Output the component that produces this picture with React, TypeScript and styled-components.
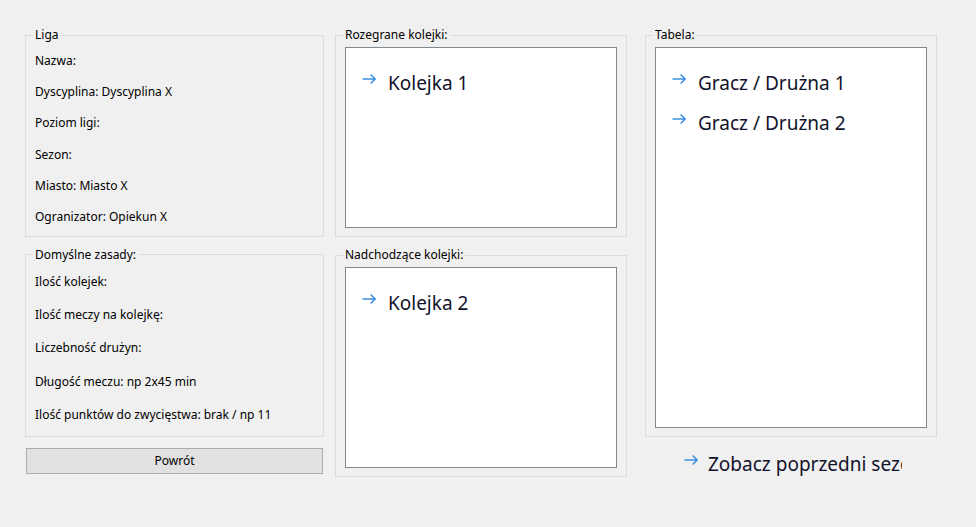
import React from "react";
import styled, { createGlobalStyle } from "styled-components";

const GlobalStyle = createGlobalStyle`
  html, body {
    margin: 0;
    padding: 0;
    background: #f0f0f0;
  }
  body {
    font-family: "Noto Sans", "Open Sans", sans-serif;
    font-size: 12px;
    color: #000;
  }
`;

const Page = styled.div`
  width: 976px;
  height: 527px;
  box-sizing: border-box;
  padding: 27px 0 0 25px;
  display: flex;
  align-items: flex-start;
`;

const Column = styled.div<{ $width: number; $ml?: number }>`
  width: ${(p) => p.$width}px;
  margin-left: ${(p) => p.$ml ?? 0}px;
  display: flex;
  flex-direction: column;
  gap: 10px;
`;

const GroupBox = styled.fieldset<{ $pt: number; $pb: number }>`
  margin: 0;
  min-width: 0;
  border: 1px solid #dcdcdc;
  padding: ${(p) => p.$pt}px 9px ${(p) => p.$pb}px;
  display: flex;
  flex-direction: column;
`;

const Legend = styled.legend`
  padding: 0 2px;
  margin-left: -2px;
  font-size: 12px;
  line-height: 16px;
  color: #000;
`;

const Fields = styled.div<{ $gap: number }>`
  display: flex;
  flex-direction: column;
  gap: ${(p) => p.$gap}px;
`;

const Field = styled.div`
  font-size: 12px;
  line-height: 16px;
  white-space: nowrap;
`;

const ListBox = styled.div<{ $height: number }>`
  height: ${(p) => p.$height}px;
  box-sizing: border-box;
  background: #fff;
  border: 1px solid #828790;
  padding: 21px 0 0 16px;
  display: flex;
  flex-direction: column;
  gap: 12px;
  overflow: hidden;
`;

const LinkItem = styled.div<{ $gap: number }>`
  display: flex;
  align-items: flex-start;
  gap: ${(p) => p.$gap}px;
  font-size: 19px;
  line-height: 28px;
  color: #12122c;
  white-space: nowrap;
`;

const ArrowIcon = styled.svg`
  flex: none;
  margin-top: 5px;
`;

const Button = styled.button`
  margin: 1px 1px 0;
  height: 26px;
  box-sizing: border-box;
  background: #e1e1e1;
  border: 1px solid #adadad;
  font-family: inherit;
  font-size: 12px;
  color: #000;
  padding: 0;
`;

const FooterLink = styled.div`
  margin: 3px 0 0 39px;
  width: 218px;
  overflow: hidden;
`;

const Arrow = () => (
  <ArrowIcon width="14" height="10" viewBox="0 0 14 10">
    <path
      d="M0.5 5H13.2M8.6 0.6L13.1 5L8.6 9.4"
      fill="none"
      stroke="#3a8ee0"
      strokeWidth="1.45"
    />
  </ArrowIcon>
);

const Item = ({ text, gap = 12 }: { text: string; gap?: number }) => (
  <LinkItem $gap={gap}>
    <Arrow />
    <span>{text}</span>
  </LinkItem>
);

export default function App() {
  return (
    <>
      <GlobalStyle />
      <Page>
        <Column $width={299}>
          <GroupBox $pt={10} $pb={11}>
            <Legend>Liga</Legend>
            <Fields $gap={15.2}>
              <Field>Nazwa:</Field>
              <Field>Dyscyplina: Dyscyplina X</Field>
              <Field>Poziom ligi:</Field>
              <Field>Sezon:</Field>
              <Field>Miasto: Miasto X</Field>
              <Field>Ogranizator: Opiekun X</Field>
            </Fields>
          </GroupBox>
          <GroupBox $pt={11} $pb={13}>
            <Legend>Domyślne zasady:</Legend>
            <Fields $gap={17.25}>
              <Field>Ilość kolejek:</Field>
              <Field>Ilość meczy na kolejkę:</Field>
              <Field>Liczebność drużyn:</Field>
              <Field>Długość meczu: np 2x45 min</Field>
              <Field>Ilość punktów do zwycięstwa: brak / np 11</Field>
            </Fields>
          </GroupBox>
          <Button>Powrót</Button>
        </Column>
        <Column $width={292} $ml={11}>
          <GroupBox $pt={4} $pb={8}>
            <Legend>Rozegrane kolejki:</Legend>
            <ListBox $height={181}>
              <Item text="Kolejka 1" />
            </ListBox>
          </GroupBox>
          <GroupBox $pt={4} $pb={8}>
            <Legend>Nadchodzące kolejki:</Legend>
            <ListBox $height={201}>
              <Item text="Kolejka 2" />
            </ListBox>
          </GroupBox>
        </Column>
        <Column $width={292} $ml={18}>
          <GroupBox $pt={4} $pb={8}>
            <Legend>Tabela:</Legend>
            <ListBox $height={381}>
              <Item text="Gracz / Drużna 1" />
              <Item text="Gracz / Drużna 2" />
            </ListBox>
          </GroupBox>
          <FooterLink>
            <Item text="Zobacz poprzedni sezon" gap={10} />
          </FooterLink>
        </Column>
      </Page>
    </>
  );
}
